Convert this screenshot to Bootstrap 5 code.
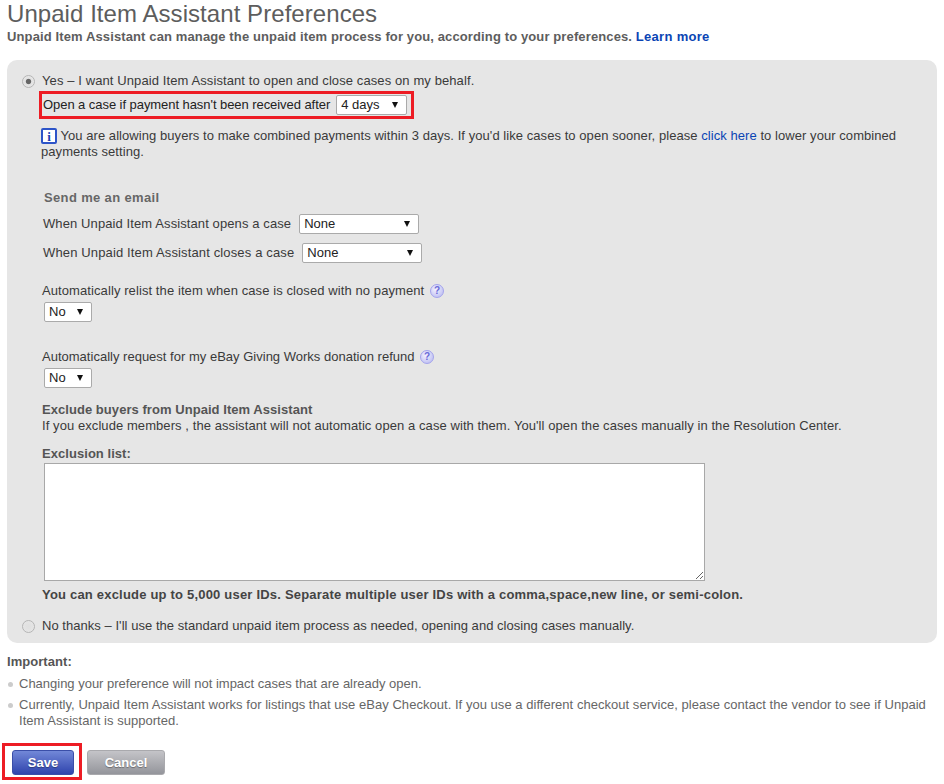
<!DOCTYPE html>
<html lang="en">
<head>
  <meta charset="UTF-8" />
  <meta name="viewport" content="width=device-width, initial-scale=1" />
  <title>Unpaid Item Assistant Preferences</title>
  <link href="https://cdn.jsdelivr.net/npm/bootstrap@5.3.2/dist/css/bootstrap.min.css" rel="stylesheet" />
  <style>
    body {
      font-family: "Liberation Sans", Arial, sans-serif;
      font-size: 13px;
      letter-spacing: .06px;
      line-height: 16px;
      color: #3a3a3a;
      background: #fff;
      height: 784px;
      overflow: hidden;
      padding: 0 7px;
    }
    a { color: #0a44b4; text-decoration: none; }
    .page-title { font-size: 24px; line-height: 28px; font-weight: 400; letter-spacing: .06px; color: #5d5d5d; margin: 0; }
    .page-sub { font-size: 13px; font-weight: 700; letter-spacing: .12px; color: #5d5d5d; margin: 1px 0 0; height: 16px; }
    .page-sub a { letter-spacing: .3px; }
    .pref-panel { background: #e6e6e6; border-radius: 10px; margin-top: 15px; height: 583px; padding: 13px 0 0 14px; }
    .pref-radio {
      appearance: none; width: 13px; height: 13px; border-radius: 50%; border: 1px solid #b5b5b5;
      background: radial-gradient(circle, #e0e0e0 0, #e4e4e4 60%, #f0f0f0 100%); margin: 0 7px 0 1px; flex: none;
    }
    .pref-radio:checked { background: radial-gradient(circle, #666 0, #666 28%, #e0e0e0 40%, #f0f0f0 100%); }
    .case-box { border: 3px solid #ed1c24; height: 28px; width: 375px; margin: 2px 0 0 18px; padding-left: 1px; gap: 6px; color: #222; letter-spacing: -.06px; }
    .pref-select {
      appearance: none; font-family: inherit; font-size: 13px; line-height: 16px; color: #222; height: 20px;
      border: 1px solid #aaa; border-radius: 2px; padding: 0 0 0 4px;
      background: #fff url("data:image/svg+xml,%3Csvg xmlns='http://www.w3.org/2000/svg' width='6' height='6'%3E%3Cpath d='M0 0h6L3 6z' fill='%23111'/%3E%3C/svg%3E") no-repeat right 8px center;
    }
    .w-days { width: 71px; }
    .w-none { width: 120px; }
    .w-no { width: 48px; }
    .yes-text { letter-spacing: .1px; }
    .no-text { letter-spacing: .04px; }
    .info-note { margin: 9px 0 0 20px; padding-right: 24px; }
    .info-icon {
      display: inline-block; width: 16px; height: 16px; line-height: 13px; text-align: center; vertical-align: -1px;
      border: 2px solid #2d54c8; border-radius: 2px; background: #fff; color: #1b3fb0;
      font-family: "Liberation Serif", serif; font-weight: 700; font-size: 13px;
    }
    .section-head { font-weight: 700; color: #666; font-size: 13px; letter-spacing: .35px; margin: 30px 0 0 23px; }
    .mail-row { gap: 8px; height: 20px; margin-left: 22px; letter-spacing: .1px; }
    .mail-closes { letter-spacing: .14px; margin-top: 9px; }
    .help-icon {
      display: inline-block; width: 14px; height: 14px; line-height: 12px; border-radius: 50%; text-align: center; margin-left: 2px;
      border: 1px solid #a3a3ec; background: radial-gradient(circle at 40% 35%, #f2f2fe, #b4b4f0); color: #6a6ad8; font-size: 10px; font-weight: 700; vertical-align: 1px;
    }
    .block-label { margin: 0 0 0 21px; }
    .relist-text { letter-spacing: .09px; margin-top: 20px; }
    .refund-text { letter-spacing: .01px; margin-top: 27px; }
    .exclude-head { margin-top: 14px; }
    .desc-text { letter-spacing: .075px; }
    .yesno-select { margin: 3px 0 0 23px; }
    .exclude-area { display: block; width: 661px; height: 118px; margin: 1px 0 0 23px; border: 1px solid #a8a8a8; background: #fff; }
    .bold-gray { font-weight: 700; color: #555; letter-spacing: .05px; }
    .limit-note { letter-spacing: .2px; color: #444; margin-top: 6px; }
    .notes-list { list-style: none; margin: 6px 0 0; padding: 0 0 0 12px; color: #666; letter-spacing: .035px; }
    .notes-list li { position: relative; margin-bottom: 5px; }
    .notes-list li:first-child { letter-spacing: -.01px; }
    .notes-list li::before { content: ""; position: absolute; left: -11px; top: 6px; width: 5px; height: 5px; border-radius: 50%; background: #ccc; }
    .save-box { border: 3px solid #ed1c24; width: 80px; height: 37px; margin-left: -5px; padding: 4px 0 0 7px; }
    .pref-btn {
      font-family: inherit; font-size: 13px; font-weight: 700; color: #fff; height: 25px; border: 1px solid transparent; border-radius: 3px; padding: 0;
      text-shadow: 0 1px 1px rgba(0,0,0,.35);
    }
    .btn-save { width: 62px; background: linear-gradient(#7288d8, #2f44ad); border-color: #3a4ea8; }
    .btn-abort { width: 78px; background: linear-gradient(#c4c4c8, #94959b); border-color: #a9a9ad; margin-left: 5px; }
  </style>
</head>
<body>
  <h1 class="page-title">Unpaid Item Assistant Preferences</h1>
  <p class="page-sub">Unpaid Item Assistant can manage the unpaid item process for you, according to your preferences. <a href="#">Learn more</a></p>

  <div class="pref-panel">
    <label class="d-flex align-items-center">
      <input type="radio" name="uia" class="pref-radio" checked />
      <span class="yes-text">Yes – I want Unpaid Item Assistant to open and close cases on my behalf.</span>
    </label>

    <div class="case-box d-flex align-items-center">
      <span>Open a case if payment hasn't been received after</span>
      <select class="pref-select w-days"><option>4 days</option></select>
    </div>

    <p class="info-note mb-0"><span class="info-icon">i</span> You are allowing buyers to make combined payments within 3 days. If you'd like cases to open sooner, please <a href="#">click here</a> to lower your combined payments setting.</p>

    <div class="section-head">Send me an email</div>
    <div class="mail-row d-flex align-items-center mt-2">
      <span>When Unpaid Item Assistant opens a case</span>
      <select class="pref-select w-none"><option>None</option></select>
    </div>
    <div class="mail-row mail-closes d-flex align-items-center">
      <span>When Unpaid Item Assistant closes a case</span>
      <select class="pref-select w-none"><option>None</option></select>
    </div>

    <p class="block-label relist-text">Automatically relist the item when case is closed with no payment <span class="help-icon">?</span></p>
    <select class="pref-select w-no d-block yesno-select"><option>No</option></select>

    <p class="block-label refund-text">Automatically request for my eBay Giving Works donation refund <span class="help-icon">?</span></p>
    <select class="pref-select w-no d-block yesno-select"><option>No</option></select>

    <div class="block-label bold-gray exclude-head">Exclude buyers from Unpaid Item Assistant</div>
    <p class="block-label desc-text">If you exclude members , the assistant will not automatic open a case with them. You'll open the cases manually in the Resolution Center.</p>
    <div class="block-label bold-gray" style="margin-top:12px">Exclusion list:</div>
    <textarea class="exclude-area"></textarea>
    <div class="block-label bold-gray limit-note">You can exclude up to 5,000 user IDs. Separate multiple user IDs with a comma,space,new line, or semi-colon.</div>

    <label class="d-flex align-items-center" style="margin-top:15px">
      <input type="radio" name="uia" class="pref-radio" />
      <span class="no-text">No thanks – I'll use the standard unpaid item process as needed, opening and closing cases manually.</span>
    </label>
  </div>

  <div class="bold-gray" style="margin-top:11px">Important:</div>
  <ul class="notes-list">
    <li>Changing your preference will not impact cases that are already open.</li>
    <li>Currently, Unpaid Item Assistant works for listings that use eBay Checkout. If you use a different checkout service, please contact the vendor to see if Unpaid Item Assistant is supported.</li>
  </ul>

  <div class="d-flex" style="margin-top:14px">
    <div class="save-box"><button type="button" class="pref-btn btn-save">Save</button></div>
    <div style="padding-top:7px"><button type="button" class="pref-btn btn-abort">Cancel</button></div>
  </div>
  <script src="https://cdn.jsdelivr.net/npm/bootstrap@5.3.2/dist/js/bootstrap.bundle.min.js"></script>
</body>
</html>
